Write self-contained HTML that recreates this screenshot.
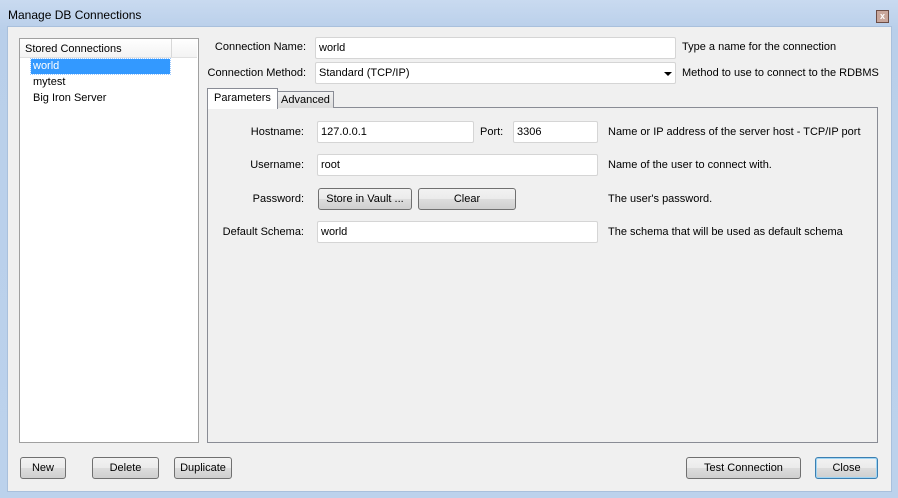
<!DOCTYPE html><html><head><style>
body{margin:0;width:898px;height:498px;overflow:hidden;font-family:"Liberation Sans",sans-serif;font-size:11px;color:#000;background:#bcd2ec}
.a{position:absolute}
.inp{position:absolute;background:#fff;border:1px solid #d5d5d5;border-radius:2px;box-sizing:border-box;padding:4px 0 0 3px}
.btn{position:absolute;box-sizing:border-box;border:1px solid #707070;border-radius:3px;background:linear-gradient(#f2f2f2,#ebebeb 50%,#dddddd 50%,#cfcfcf);text-align:center;line-height:20px}
.lbl{position:absolute;text-align:right}
</style></head><body>
<div class="a" style="left:0;top:0;width:898px;height:498px;background:linear-gradient(#c9daf0,#b9cfea 30px,#bcd2ec)"></div>
<div class="a" style="left:8px;top:8px;font-size:12px">Manage DB Connections</div>
<div class="a" style="left:876px;top:10px;width:11px;height:11px;border:1px solid #6d4d45;background:#c9a79c;font-size:9px;line-height:11px;text-align:center;color:#fff;font-weight:bold">x</div>
<div class="a" style="left:7px;top:26px;width:883px;height:464px;background:#f0f0f0;border:1px solid #a9c0dc"></div>
<div class="a" style="left:19px;top:38px;width:178px;height:403px;background:#fff;border:1px solid #a0a0a0"></div>
<div class="a" style="left:20px;top:39px;width:177px;height:18px;background:linear-gradient(#fff,#f3f3f3);border-bottom:1px solid #e0e0e0"></div>
<div class="a" style="left:171px;top:39px;width:1px;height:18px;background:#d8d8d8"></div>
<div class="a" style="left:25px;top:43px">Stored Connections</div>
<div class="a" style="left:31px;top:59px;width:139px;height:15px;background:#3399ff;outline:1px dotted #9cc9ff"></div>
<div class="a" style="left:33px;top:60px;color:#fff">world</div>
<div class="a" style="left:33px;top:76px">mytest</div>
<div class="a" style="left:33px;top:92px">Big Iron Server</div>
<div class="lbl" style="left:200px;width:106px;top:41px">Connection Name:</div>
<div class="inp" style="left:315px;top:37px;width:361px;height:22px">world</div>
<div class="a" style="left:682px;top:41px">Type a name for the connection</div>
<div class="lbl" style="left:200px;width:106px;top:67px">Connection Method:</div>
<div class="inp" style="left:315px;top:62px;width:361px;height:22px">Standard (TCP/IP)</div>
<div class="a" style="left:664px;top:72px;width:0;height:0;border-left:4px solid transparent;border-right:4px solid transparent;border-top:4px solid #000"></div>
<div class="a" style="left:682px;top:67px">Method to use to connect to the RDBMS</div>
<div class="a" style="left:207px;top:107px;width:669px;height:334px;border:1px solid #898c95;background:#f0f0f0"></div>
<div class="a" style="left:277px;top:91px;width:55px;height:16px;border:1px solid #898c95;border-bottom:none;background:linear-gradient(#f2f2f2,#dcdcdc)"></div>
<div class="a" style="left:281px;top:94px">Advanced</div>
<div class="a" style="left:207px;top:88px;width:69px;height:20px;border:1px solid #898c95;border-bottom:none;background:#fff"></div>
<div class="a" style="left:214px;top:92px">Parameters</div>
<div class="a" style="left:211px;top:110px;width:662px;height:329px;background:#f0f0f0"></div>
<div class="lbl" style="left:210px;width:94px;top:126px">Hostname:</div>
<div class="inp" style="left:317px;top:121px;width:157px;height:22px">127.0.0.1</div>
<div class="a" style="left:480px;top:126px">Port:</div>
<div class="inp" style="left:513px;top:121px;width:85px;height:22px">3306</div>
<div class="a" style="left:608px;top:126px">Name or IP address of the server host - TCP/IP port</div>
<div class="lbl" style="left:210px;width:94px;top:159px">Username:</div>
<div class="inp" style="left:317px;top:154px;width:281px;height:22px">root</div>
<div class="a" style="left:608px;top:159px">Name of the user to connect with.</div>
<div class="lbl" style="left:210px;width:94px;top:193px">Password:</div>
<div class="btn" style="left:318px;top:188px;width:94px;height:22px">Store in Vault ...</div>
<div class="btn" style="left:418px;top:188px;width:98px;height:22px">Clear</div>
<div class="a" style="left:608px;top:193px">The user's password.</div>
<div class="lbl" style="left:200px;width:104px;top:226px">Default Schema:</div>
<div class="inp" style="left:317px;top:221px;width:281px;height:22px">world</div>
<div class="a" style="left:608px;top:226px">The schema that will be used as default schema</div>
<div class="btn" style="left:20px;top:457px;width:46px;height:22px">New</div>
<div class="btn" style="left:92px;top:457px;width:67px;height:22px">Delete</div>
<div class="btn" style="left:174px;top:457px;width:58px;height:22px">Duplicate</div>
<div class="btn" style="left:686px;top:457px;width:115px;height:22px">Test Connection</div>
<div class="btn" style="left:815px;top:457px;width:63px;height:22px;border-color:#3c7fb1;box-shadow:inset 0 0 0 1px #9fd5f4">Close</div>
</body></html>
